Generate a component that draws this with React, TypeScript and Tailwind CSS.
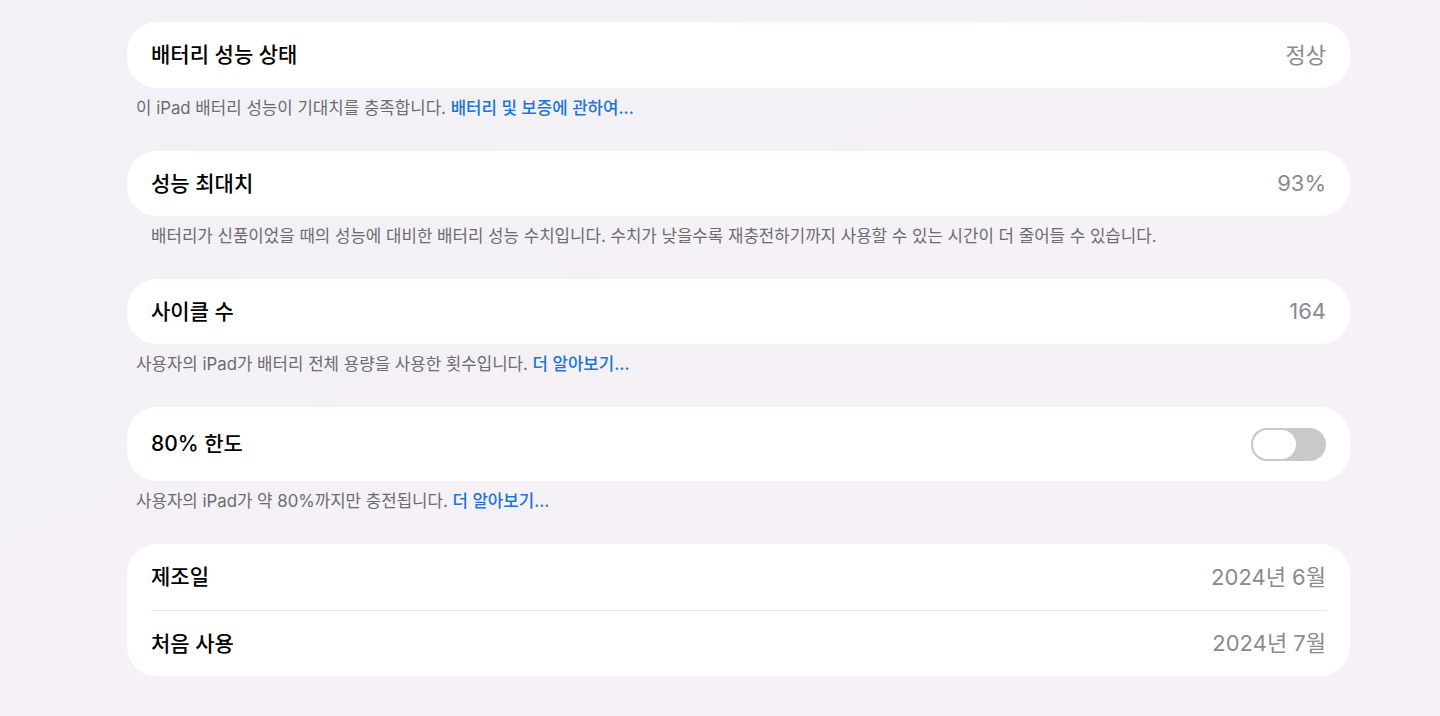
import React from "react";

const font = { fontFamily: '"Inter", "Noto Sans CJK KR", sans-serif' };

function Card({ children, className = "" }: { children: React.ReactNode; className?: string }) {
  return <div className={`bg-white rounded-[30px] ${className}`}>{children}</div>;
}

function Row({ label, value, h = "h-[66px]" }: { label: string; value: React.ReactNode; h?: string }) {
  return (
    <div className={`flex items-center justify-between px-6 ${h}`}>
      <span className="text-[21px] font-medium text-black">{label}</span>
      <span className="text-[22px] text-[#8a8a8e]">{value}</span>
    </div>
  );
}

function Footer({ children, indent = "pl-[9px]" }: { children: React.ReactNode; indent?: string }) {
  return (
    <p className={`h-[63px] pt-[9px] text-[16.8px] leading-[22px] text-[#6c6c70] ${indent}`}>{children}</p>
  );
}

function Link({ children }: { children: React.ReactNode }) {
  return <span className="text-[#1c74d6] font-medium">{children}</span>;
}

function Toggle() {
  return (
    <div className="relative w-[75px] h-[33px] rounded-full bg-[#c9c9cb]">
      <div className="absolute left-0 top-0 w-[47px] h-[33px] rounded-full bg-white border-2 border-[#c9c9cb]" />
    </div>
  );
}

export default function App() {
  return (
    <div style={font} className="min-h-screen w-full bg-[#f5f1f6] bg-gradient-to-br from-[#f1f1f7] via-[#f5f1f6] to-[#f5f1f6]">
      <div className="pt-[22px] pl-[127px] w-[1350px]">
        <Card>
          <Row label="배터리 성능 상태" value="정상" />
        </Card>
        <Footer>
          이 iPad 배터리 성능이 기대치를 충족합니다. <Link>배터리 및 보증에 관하여...</Link>
        </Footer>

        <Card>
          <Row label="성능 최대치" value="93%" h="h-[65px]" />
        </Card>
        <Footer indent="pl-6">
          배터리가 신품이었을 때의 성능에 대비한 배터리 성능 수치입니다. 수치가 낮을수록 재충전하기까지 사용할 수 있는 시간이 더 줄어들 수 있습니다.
        </Footer>

        <Card>
          <Row label="사이클 수" value="164" h="h-[65px]" />
        </Card>
        <Footer>
          사용자의 iPad가 배터리 전체 용량을 사용한 횟수입니다. <Link>더 알아보기...</Link>
        </Footer>

        <Card>
          <div className="flex items-center justify-between pl-6 pr-6 h-[74px]">
            <span className="text-[21px] font-medium text-black">80% 한도</span>
            <Toggle />
          </div>
        </Card>
        <Footer>
          사용자의 iPad가 약 80%까지만 충전됩니다. <Link>더 알아보기...</Link>
        </Footer>

        <Card>
          <Row label="제조일" value="2024년 6월" />
          <div className="mx-6 h-px bg-[#e4e2e6]" />
          <Row label="처음 사용" value="2024년 7월" h="h-[65px]" />
        </Card>
      </div>
    </div>
  );
}
